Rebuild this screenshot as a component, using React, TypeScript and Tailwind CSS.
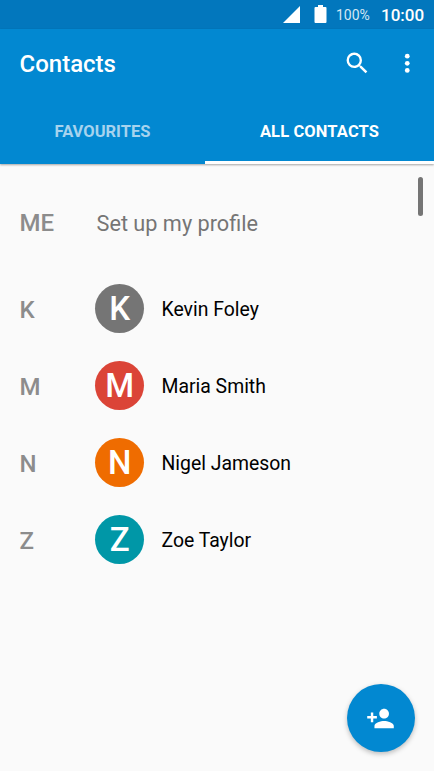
const contacts = [
  { letter: "K", name: "Kevin Foley", color: "bg-[#757575]" },
  { letter: "M", name: "Maria Smith", color: "bg-[#db4437]" },
  { letter: "N", name: "Nigel Jameson", color: "bg-[#ef6c00]" },
  { letter: "Z", name: "Zoe Taylor", color: "bg-[#0097a7]" },
];

function StatusBar() {
  return (
    <div className="flex h-[29px] items-center bg-[#0277bd] pl-[283px] text-white">
      <svg className="h-[17px] w-[17px] shrink-0" viewBox="0 0 17 17" fill="currentColor">
        <path d="M17 0v17H0z" />
      </svg>
      <svg className="mb-px ml-[14px] h-[18px] w-[13px] shrink-0" viewBox="0 0 13 18" fill="currentColor">
        <path d="M4 0h5v2h2.5q1 0 1 1v14q0 1-1 1h-10q-1 0-1-1V3q0-1 1-1H4z" />
      </svg>
      <span className="ml-[9px] w-[45px] shrink-0 pt-px text-[14px] leading-none text-[#d5e7f3]">100%</span>
      <span className="shrink-0 pt-px text-[17px] leading-none font-medium">10:00</span>
    </div>
  );
}

function Header() {
  return (
    <header className="flex h-[135px] flex-col bg-[#0288d1] text-white shadow-[0_1px_2px_rgba(0,0,0,0.35)]">
      <div className="flex h-[69px] items-center pr-[13px] pl-[19.5px]">
        <h1 className="flex-1 text-[24px] leading-none font-medium">Contacts</h1>
        <svg className="mr-[21px] h-[28.5px] w-[28.5px]" viewBox="0 0 24 24" fill="currentColor">
          <path d="M15.5 14h-.79l-.28-.27A6.471 6.471 0 0 0 16 9.5 6.5 6.5 0 1 0 9.5 16c1.61 0 3.09-.59 4.23-1.57l.27.28v.79l5 4.99L20.49 19l-4.99-5zm-6 0C7.01 14 5 11.99 5 9.5S7.01 5 9.5 5 14 7.01 14 9.5 11.99 14 9.5 14z" />
        </svg>
        <svg className="h-[28.5px] w-[28.5px]" viewBox="0 0 24 24" fill="currentColor">
          <circle cx="12" cy="6" r="2" />
          <circle cx="12" cy="12" r="2" />
          <circle cx="12" cy="18" r="2" />
        </svg>
      </div>
      <nav className="flex flex-1 text-[16.5px] font-bold">
        <div className="flex w-[205px] items-center justify-center pt-[2px] text-[#a6d3ee]">FAVOURITES</div>
        <div className="flex flex-1 items-center justify-center border-b-[3px] border-white pt-[5px] tracking-[0.12px]">ALL CONTACTS</div>
      </nav>
    </header>
  );
}

export default function App() {
  return (
    <main className="relative h-[771px] w-[434px] overflow-hidden bg-[#fafafa] font-[Roboto,sans-serif]">
      <StatusBar />
      <Header />
      <div className="pt-[21px]">
        <div className="flex h-[77px] items-center pl-[19.5px] leading-none">
          <span className="w-[77px] pb-[2px] text-[24px] font-medium text-[#8c8c8c]">ME</span>
          <span className="text-[21.7px] text-[#757575]">Set up my profile</span>
        </div>
        <div className="pt-[8px]">
          {contacts.map((c) => (
            <div key={c.letter} className="flex h-[77px] items-center pl-[19.5px] leading-none">
              <span className="w-[75.5px] pt-[2px] text-[24px] font-medium text-[#8c8c8c]">{c.letter}</span>
              <span className={`flex h-[48.5px] w-[48.5px] items-center justify-center rounded-full pl-px text-[33px] font-medium text-white ${c.color}`}>
                {c.letter}
              </span>
              <span className="ml-[18px] pt-[2px] text-[19.4px] text-black">{c.name}</span>
            </div>
          ))}
        </div>
      </div>
      <div className="absolute top-[177px] right-[11px] h-[39px] w-[5px] rounded-full bg-[#757575]" />
      <button className="absolute top-[684px] left-[347px] flex h-[68px] w-[68px] items-center justify-center rounded-full bg-[#0288d1] text-white shadow-[0_2px_5px_rgba(0,0,0,0.25)]">
        <svg className="mr-px h-[29px] w-[29px]" viewBox="0 0 24 24" fill="currentColor">
          <path d="M15 12c2.21 0 4-1.79 4-4s-1.79-4-4-4-4 1.79-4 4 1.79 4 4 4zm-9-2V7H4v3H1v2h3v3h2v-3h3v-2H6zm9 4c-2.67 0-8 1.34-8 4v2h16v-2c0-2.66-5.33-4-8-4z" />
        </svg>
      </button>
    </main>
  );
}
